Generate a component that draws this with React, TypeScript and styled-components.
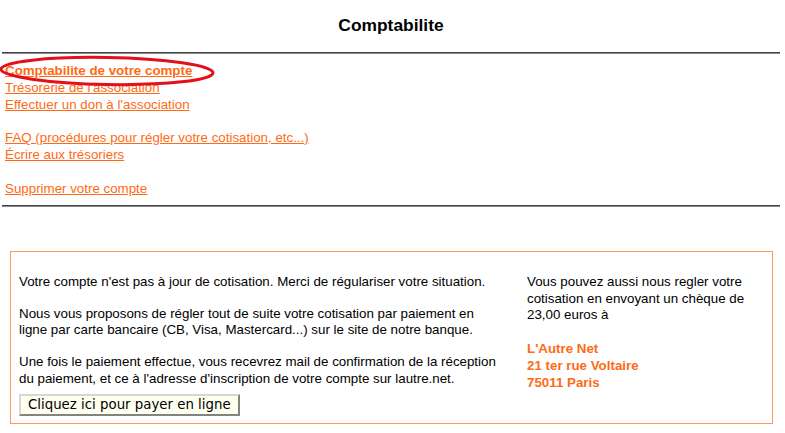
import styled, { createGlobalStyle } from "styled-components";

const GlobalStyle = createGlobalStyle`
  html, body {
    margin: 0;
    padding: 0;
    background: #ffffff;
  }
  body {
    font-family: "Liberation Sans", Arial, sans-serif;
    font-size: 13.33px;
    color: #000000;
  }
`;

const links: { label: string; strong?: boolean; gapBefore?: boolean }[] = [
  { label: "Comptabilite de votre compte", strong: true },
  { label: "Trésorerie de l'association" },
  { label: "Effectuer un don à l'association" },
  { label: "FAQ (procédures pour régler votre cotisation, etc...)", gapBefore: true },
  { label: "Écrire aux trésoriers" },
  { label: "Supprimer votre compte", gapBefore: true },
];

const App = () => {
  return (
    <Page>
      <GlobalStyle />
      <Title>Comptabilite</Title>
      <Rule />
      <LinkList>
        {links.map((link) => (
          <LinkItem key={link.label} gapBefore={link.gapBefore}>
            <OrangeLink href="#" strong={link.strong}>
              {link.label}
            </OrangeLink>
          </LinkItem>
        ))}
        <Circle width="226" height="36" viewBox="0 0 226 36" aria-hidden="true">
          <ellipse
            cx="113"
            cy="18"
            rx="106"
            ry="13.5"
            fill="none"
            stroke="#e3101b"
            strokeWidth="3"
            transform="rotate(1 113 18)"
          />
        </Circle>
      </LinkList>
      <Rule />

      <Notice>
        <Main>
          <Para>Votre compte n'est pas à jour de cotisation. Merci de régulariser votre situation.</Para>
          <Para>
            Nous vous proposons de régler tout de suite votre cotisation par paiement en
            <br />
            ligne par carte bancaire (CB, Visa, Mastercard...) sur le site de notre banque.
          </Para>
          <Para>
            Une fois le paiement effectue, vous recevrez mail de confirmation de la réception
            <br />
            du paiement, et ce à l'adresse d'inscription de votre compte sur lautre.net.
          </Para>
          <PayButton type="button">Cliquez ici pour payer en ligne</PayButton>
        </Main>
        <Side>
          <Para>
            Vous pouvez aussi nous regler votre
            <br />
            cotisation en envoyant un chèque de
            <br />
            23,00 euros à
          </Para>
          <Address>
            L'Autre Net
            <br />
            21 ter rue Voltaire
            <br />
            75011 Paris
          </Address>
        </Side>
      </Notice>
    </Page>
  );
};

export default App;

const Page = styled.div`
  width: 785px;
  padding: 0 5px 0 2px;
  box-sizing: border-box;
`;

const Title = styled.h1`
  margin: 0;
  padding: 15px 0 0;
  height: 52px;
  box-sizing: border-box;
  text-align: center;
  font-size: 17.4px;
  line-height: 21px;
  font-weight: bold;
  color: #000;
`;

const Rule = styled.hr`
  margin: 0;
  height: 0;
  border: none;
  border-top: 1px solid #444;
  border-bottom: 1px solid #888;
`;

const LinkList = styled.ul`
  position: relative;
  list-style: none;
  margin: 0;
  padding: 9px 0 8px 3px;
`;

const LinkItem = styled.li<{ gapBefore?: boolean }>`
  line-height: 16.8px;
  margin-top: ${(p) => (p.gapBefore ? "16.8px" : "0")};
`;

const OrangeLink = styled.a<{ strong?: boolean }>`
  color: #ff6a14;
  font-size: 13.33px;
  font-weight: ${(p) => (p.strong ? "bold" : "normal")};
  text-decoration: underline;
`;

const Circle = styled.svg`
  position: absolute;
  left: -8.5px;
  top: -1.5px;
  width: 226px;
  height: 36px;
  overflow: visible;
  pointer-events: none;
`;

const Notice = styled.div`
  display: grid;
  grid-template-columns: 1fr 237px;
  column-gap: 16px;
  margin: 44px 7px 0 8px;
  padding: 22px 8px 7px 8px;
  border: 1px solid #ff9a5c;
`;

const Main = styled.div`
  display: flex;
  flex-direction: column;
  align-items: flex-start;
`;

const Side = styled.div`
  display: flex;
  flex-direction: column;
`;

const Para = styled.p`
  margin: 0 0 15.5px;
  line-height: 16.3px;
  font-size: 13.33px;
`;

const Address = styled.p`
  margin: 0;
  padding-top: 1px;
  line-height: 17px;
  font-size: 13.33px;
  font-weight: bold;
  color: #ff6a14;
`;

const PayButton = styled.button`
  margin-top: -8px;
  padding: 1px 7px 2px;
  height: 22px;
  font-family: "DejaVu Sans", Verdana, sans-serif;
  font-size: 13.33px;
  color: #000;
  background: #fffff0;
  border: 2px outset #d8d8d0;
  border-radius: 0;
`;
